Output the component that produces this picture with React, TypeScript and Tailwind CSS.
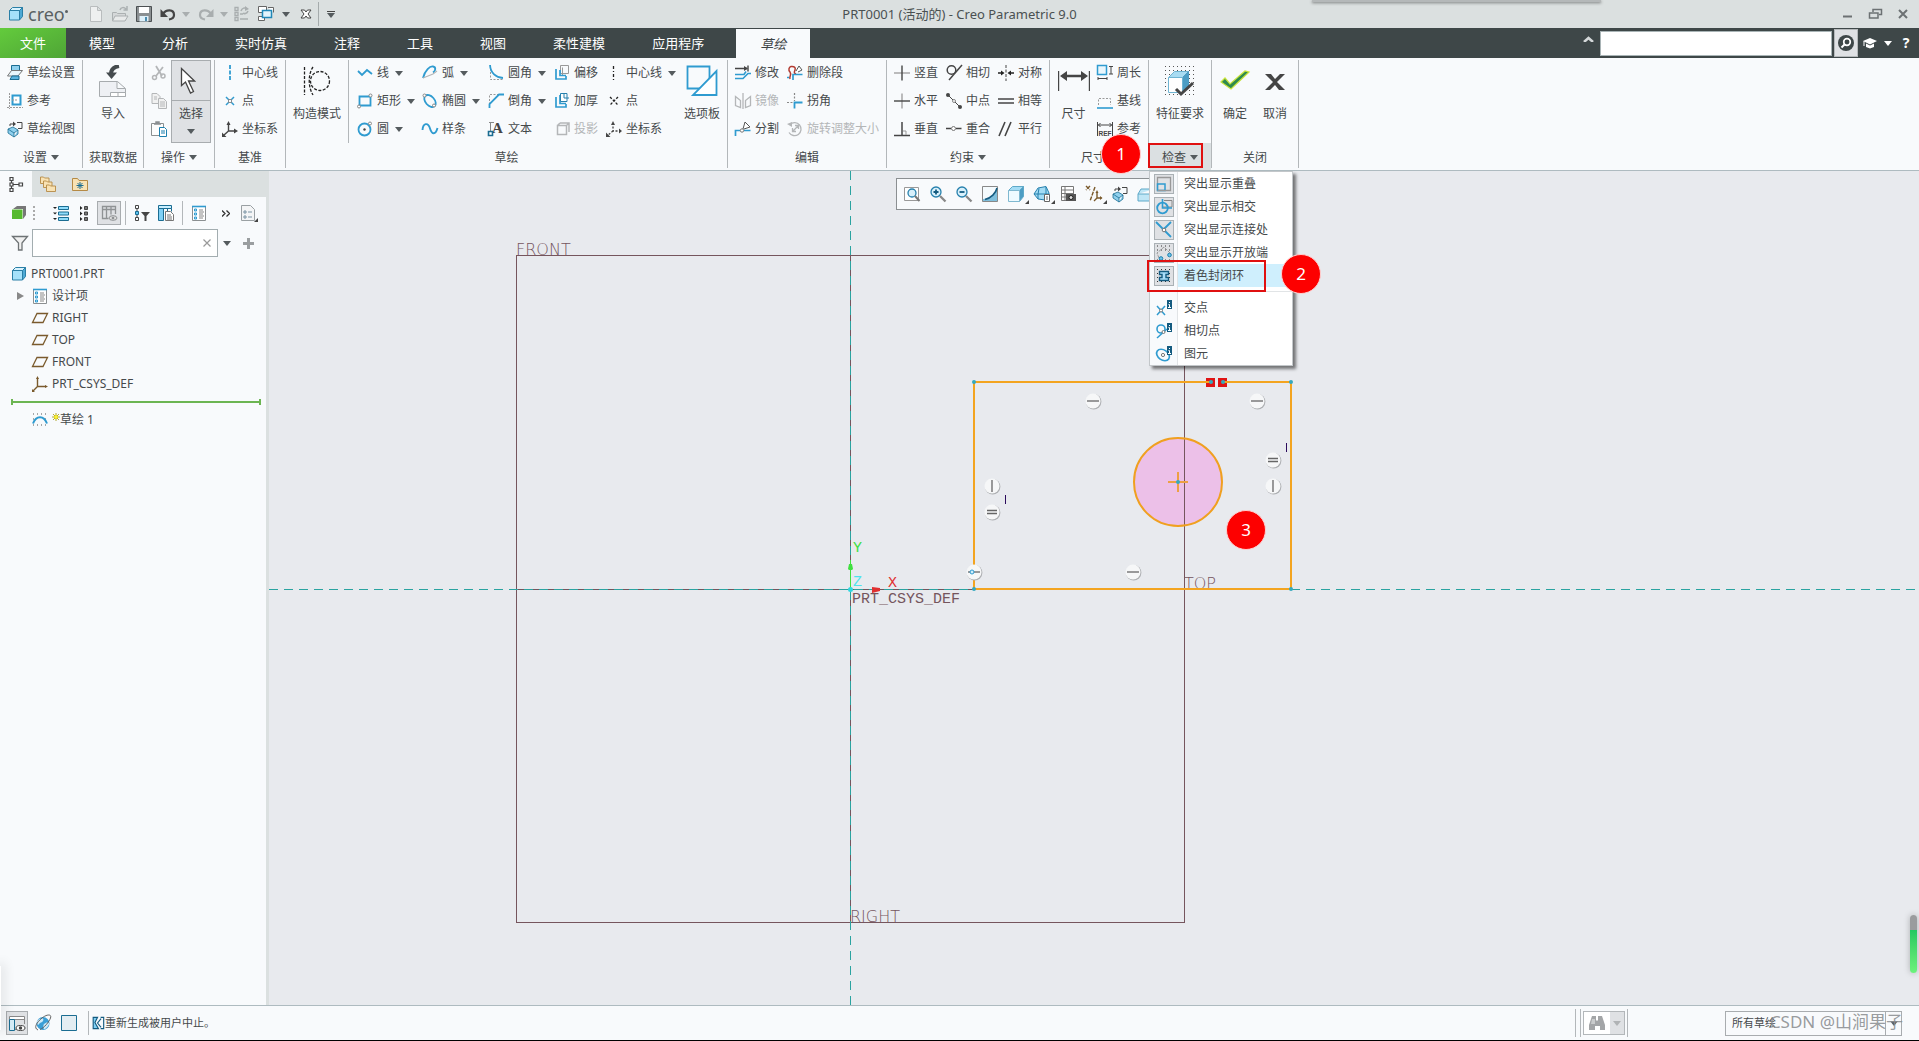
import { useState } from 'react';
import type { ReactNode } from 'react';
import clsx from 'clsx';

const B = '#2f9bd0';
const D = '#454545';
const G = '#b4b6b8';
const BROWN = '#7a5a2c';

// small 16x16 glyphs used by the ribbon, the trees and the menus
const ICONS: Record<string, ReactNode> = {
  sketchSetup: (
    <>
      <path d="M4.500 .5h8v8h-8z" fill="#8fd0ee" stroke="#1b6d92" />
      <path d="M4.500 5.500H15.500L11 11H.5z" fill="#e8f6fc" stroke="#777" />
      <path d="M3 14.500l2-3.500h7v3.500z" fill="#5bb4df" stroke="#1b6d92" />
    </>
  ),
  refs: (
    <>
      <path d="M5.500 2.500h8v9h-8z" fill="#fff" stroke={B} strokeWidth="2" />
      <path d="M2.500 0v16M0 14.500h16M5 7h6" stroke="#999" strokeDasharray="2 1" />
    </>
  ),
  sketchView: (
    <>
      <path d="M1 8l5-2 5 3-4 3zM1 8v4l6 4v-4M11 9v4l-4 3" fill="#8fd0ee" stroke="#1b6d92" strokeWidth=".8" />
      <path d="M10 1.500h5v6h-4M3 5V3h5" stroke={D} />
      <path d="M6 .5L9 3 6 5.500z" fill={D} />
    </>
  ),
  cut: (
    <>
      <path d="M5 1l6 10M12 2L5 11" stroke={G} strokeWidth="1.800" />
      <circle cx="3.500" cy="12.500" r="2" stroke={G} strokeWidth="1.500" />
      <circle cx="12" cy="11" r="2" stroke={G} strokeWidth="1.500" />
    </>
  ),
  copy: (
    <>
      <path d="M1 .5h5l3 3v7H1z" fill="#f1f1f1" stroke={G} />
      <path d="M7.500 5.500h5l3 3v7h-8zM9 9h5M9 11h5M9 13h5M3 4h3M3 6h3" fill="#f1f1f1" stroke={G} />
    </>
  ),
  paste: (
    <>
      <path d="M.5 2.500h12v12H.5z" fill="#fdfdfd" stroke="#8b8f91" />
      <path d="M3 3h7M5 1h3v1H5z" stroke="#8b8f91" strokeWidth="1.500" />
      <path d="M8.500 6.500h5l2 2v7h-7zM10 10h4M10 12h4" fill="#fff" stroke="#1b7fae" />
    </>
  ),
  axis: <path d="M8 0v16" stroke={B} strokeWidth="1.800" strokeDasharray="4 1.500" />,
  point: (
    <>
      <path d="M4 4l8 8M12 4l-8 8" stroke={B} strokeWidth="1.500" />
      <path d="M6.500 6.500h3v3h-3z" fill="#f8fafc" stroke="#777" strokeWidth=".8" />
    </>
  ),
  csys: (
    <>
      <path d="M6.500 2v8h7M6.500 10L2 14" stroke={D} strokeWidth="1.400" />
      <path d="M4.500 4l2-4 2 4zM12 7.500l4 2.500-4 2.500zM0 11.500V16h4.500z" fill={D} />
    </>
  ),
  csysDash: (
    <>
      <path d="M7 2v8h7M7 10l-5 4" stroke={D} strokeDasharray="2 1.500" strokeWidth="1.300" />
      <path d="M5 4l2-4 2 4zM13 7.500l3 2.500-3 2.500zM0 11.500V16h4.500z" fill={D} />
    </>
  ),
  line: <path d="M1 6l4 4 5-5 5 4" stroke={B} strokeWidth="1.800" />,
  rect: (
    <>
      <path d="M2.500 3.500h11v9h-11z" stroke={B} strokeWidth="1.800" />
      <circle cx="13.500" cy="2.500" r="1.500" fill="#fff" stroke="#888" />
      <circle cx="2" cy="13.500" r="1.500" fill="#fff" stroke="#888" />
    </>
  ),
  circle: (
    <>
      <circle cx="7.500" cy="8.500" r="6" stroke={B} strokeWidth="1.800" />
      <circle cx="7.500" cy="8.500" r="1.200" fill={D} />
      <circle cx="13" cy="2.500" r="1.500" fill="#fff" stroke="#888" />
    </>
  ),
  arc: (
    <>
      <path d="M1 13C3 5 8 1 11 1.500s3 4 0 6" stroke={B} strokeWidth="1.800" />
      <path d="M1 13l10-4 4-3" stroke={G} strokeWidth="1.200" />
    </>
  ),
  ellipse: (
    <>
      <ellipse cx="8" cy="8" rx="7" ry="4.500" transform="rotate(48 8 8)" stroke={B} strokeWidth="1.800" />
      <circle cx="2.500" cy="2.500" r="1.500" fill="#fff" stroke="#888" />
      <circle cx="12" cy="12.500" r="1.500" fill="#fff" stroke="#888" />
    </>
  ),
  spline: <path d="M.5 9C1 2 6 1 8 7.500S13.500 14 15.500 7" stroke={B} strokeWidth="1.900" />,
  fillet: (
    <>
      <path d="M2.500 0v14.500H16" stroke="#999" strokeDasharray="2 1.500" />
      <path d="M2 0c.5 8 6 12.500 13 13" stroke={B} strokeWidth="1.800" />
    </>
  ),
  chamfer: (
    <>
      <path d="M1.500 15V1.500H15" stroke="#999" strokeDasharray="2 1.500" />
      <path d="M1.500 15v-4L11 1.500h5" stroke={B} strokeWidth="1.800" />
    </>
  ),
  text: (
    <>
      <path d="M1 1.500h5M2.500 1v9" stroke="#888" />
      <text x="4" y="12" fontFamily="Liberation Serif, serif" fontWeight="700" fontSize="15" fill={D}>A</text>
      <path d="M.5 10.500h4v4h-4z" fill="#fff" stroke="#1b6d92" strokeWidth="1.600" />
    </>
  ),
  offset: (
    <>
      <path d="M6.500 .5h8v8h-8zM8.500 2.500v8" stroke="#999" />
      <path d="M2 4v10h10v-3M6 5v5.500h6" stroke={B} strokeWidth="1.700" />
    </>
  ),
  thicken: (
    <>
      <path d="M2 4v10h10v-3M6 2v8.500h6" stroke={B} strokeWidth="1.700" />
      <path d="M6.500 .5H13v8H6.500zM10 1v4h5" fill="#fff" stroke="#2680ad" />
    </>
  ),
  project: <path d="M3.500 4.500h9v9h-9zM6 2h9v9M3.500 4.500L6 2M12.500 4.500L15 2" stroke={G} strokeWidth="1.500" />,
  axisBlack: <path d="M7.500 1v14" stroke="#222" strokeWidth="1.300" strokeDasharray="3 2 1 2" />,
  pointBlack: <path d="M4 4l8 8M12 4l-8 8" stroke="#222" strokeWidth="1.300" strokeDasharray="2.500 1.500" />,
  modify: (
    <>
      <path d="M0 3.500h12M13 .5v6" stroke={D} strokeWidth="1.400" />
      <path d="M9 1l4 2.500L9 6z" fill={D} />
      <path d="M0 9.500h9l2-3M0 13.500h8l5-5h3" stroke={B} strokeWidth="1.600" />
    </>
  ),
  mirror: <path d="M8 0v16M.5 3.500l5 4v7l-5-2zM15.500 3.500l-5 4v7l5-2z" stroke={G} strokeWidth="1.300" />,
  divide: (
    <>
      <path d="M.5 15V9.500H5M9 9.500h6.500" stroke={B} strokeWidth="1.700" />
      <circle cx="7" cy="9.500" r="1.700" fill="#fff" stroke="#777" />
      <path d="M8 8l2-7 5 5-6 2" fill="#fff" stroke="#555" />
    </>
  ),
  deleteSeg: (
    <>
      <path d="M3 14c-1-3 2-4 0-7-2-2-1-5 1-5.500 3-.5 5 1 4 3.500s-1 3 1 4" stroke="#b23a30" strokeWidth="1.500" />
      <path d="M0 12.500h2M6 15V9.500h9.500" stroke={B} strokeWidth="1.700" />
      <path d="M9 6l3-5 3 4-4 2" fill="#fff" stroke="#555" />
    </>
  ),
  corner: (
    <>
      <path d="M7.500 0v8M0 9.500h7" stroke="#888" strokeWidth="1.200" strokeDasharray="2 1.500" />
      <path d="M7.500 15.500v-6h8" stroke={B} strokeWidth="1.800" />
    </>
  ),
  rotate: (
    <>
      <path d="M3 3.500a6.500 6.500 0 1 1-1 8M6 10l5-5M8 4.500h3.500V8M5.500 7v3.500H9" stroke={G} strokeWidth="1.300" />
      <path d="M0 3l5-2v5z" fill={G} />
    </>
  ),
  vertical: (
    <>
      <path d="M0 8h16" stroke="#999" strokeWidth="1.300" />
      <path d="M8 .5v15" stroke={D} strokeWidth="1.400" />
    </>
  ),
  horizontal: (
    <>
      <path d="M8 .5v15" stroke="#999" strokeWidth="1.300" />
      <path d="M0 8h16" stroke={D} strokeWidth="1.400" />
    </>
  ),
  perpendicular: (
    <>
      <path d="M8 1v13M0 14.500h16" stroke={D} strokeWidth="1.500" />
      <path d="M9 10h3v4" stroke="#999" />
    </>
  ),
  tangent: (
    <>
      <circle cx="5.500" cy="5" r="4.300" stroke={D} strokeWidth="1.500" />
      <path d="M16 0L3 15" stroke={D} strokeWidth="1.500" />
    </>
  ),
  midpoint: (
    <>
      <path d="M2 2l12 12" stroke={D} />
      <circle cx="2" cy="2" r="2" fill={D} />
      <circle cx="14" cy="14" r="2" fill={D} />
      <circle cx="8" cy="8" r="1.500" fill="#fff" stroke="#888" />
    </>
  ),
  coincident: (
    <>
      <path d="M0 7.500h5M10 7.500h5.500" stroke={D} strokeWidth="1.500" />
      <circle cx="7.500" cy="7.500" r="2" fill="#fff" stroke="#777" />
    </>
  ),
  symmetric: (
    <>
      <path d="M8 0v16" stroke={D} strokeDasharray="3 1.500" />
      <path d="M0 8h4M12 8h4" stroke="#222" strokeWidth="1.500" />
      <path d="M3 5.500l3.500 2.500L3 10.500zM13 5.500L9.500 8l3.500 2.500z" fill="#222" />
    </>
  ),
  equal: <path d="M0 6h16M0 10h16" stroke={D} strokeWidth="1.500" />,
  parallel: <path d="M7 1L1 15M13 1L7 15" stroke={D} strokeWidth="1.600" />,
  perimeter: (
    <>
      <path d="M.5 .5h9v9h-9z" fill="#e9f6fc" stroke={B} strokeWidth="1.500" />
      <path d="M14 1v8M12 1.500h4M12 9h4M1 13.500h9M1 12v3M10 12v3" stroke={D} />
    </>
  ),
  baseline: (
    <>
      <path d="M1.500 12V5.500h12V12" stroke="#999" strokeDasharray="2 1.500" />
      <path d="M0 15h16" stroke={B} strokeWidth="1.600" />
    </>
  ),
  refDim: (
    <>
      <path d="M.5 1v14M15.500 1v14M1 4h14M3.500 2L1.500 4l2 2M12.500 2l2 2-2 2" stroke={D} />
      <text x="1.500" y="14.500" fontFamily="Liberation Sans, sans-serif" fontWeight="700" fontSize="6.500" fill={D}>REF</text>
    </>
  ),
  cube: (
    <>
      <path d="M1.500 4.500L4.500 1.500h10l-3 3z" fill="#d8f2fd" stroke="#2a7fa6" />
      <path d="M11.500 4.500l3-3v9l-3 3.500z" fill="#4ea9d4" stroke="#2a7fa6" />
      <path d="M1.500 4.500h10V14h-10z" fill="#a5e1fa" stroke="#2a7fa6" />
    </>
  ),
  greenCube: (
    <>
      <path d="M2 4l4-3h9l-3 3zM12 4l3-3v9l-3 4z" fill="#777" />
      <path d="M1 4.500h10.500V14H1z" fill="#57b92f" />
    </>
  ),
  plane: <path d="M5 3.500h10.500L11 12.500H.5z" stroke={BROWN} strokeWidth="1.300" />,
  csysBrown: (
    <>
      <path d="M5.500 2v8.500H14M5.500 10.500L1 15" stroke={BROWN} strokeWidth="1.400" />
      <path d="M4 3L5.500 0 7 3zM13 9l3 1.500-3 1.500zM0 13v3h3z" fill={BROWN} />
    </>
  ),
  list: (
    <>
      <path d="M1.500 1.500h13v14h-13z" fill="#fff" stroke="#8b8f91" />
      <path d="M1 1.500h14" stroke={B} strokeWidth="1.600" />
      <path d="M3.500 4h2v2h-2zM3.500 8h2v2h-2zM3.500 12h2v2h-2z" stroke={B} fill="#cfeefb" />
      <path d="M8 5h4M8 7h5M8 9h4M8 11h5M8 13h4" stroke="#888" />
    </>
  ),
  sketchArc: (
    <>
      <path d="M1 2h1M5 2h1M9 2h1M13 2h1M1 13h1M5 13h1M9 13h1M13 13h1M1 7h1M13 7h1" stroke="#555" />
      <path d="M1 11.500C4 3 12 3 15 11.500" stroke={B} strokeWidth="2" />
    </>
  ),
  treeTab: (
    <path d="M2 1.500h3v3H2zM2 7h3v3H2zM2 12.500h3v3H2zM11 7h3.500v3H11zM3.500 4.500V7M3.500 10v2.500M5 8.500h6" stroke={D} strokeWidth="1.200" />
  ),
  folders: (
    <g fill="#f8e2b4" stroke="#b58a45" strokeWidth=".9">
      <path d="M.5 1h3l1 1h4.500v5.500H.5z" />
      <path d="M3.500 5h3l1 1h4.500v5.500H3.500z" />
      <path d="M6.500 9h3l1 1h5v5.500h-9z" />
    </g>
  ),
  favFolder: (
    <>
      <path d="M.5 2.500h5l1.500 2h8.500v10H.5z" fill="#f8e2b4" stroke="#b58a45" />
      <path d="M8 6v7M4.500 9.500h7M5.500 7l5 5M10.500 7l-5 5" stroke="#1b6d92" />
    </>
  ),
  expand: (
    <>
      <path d="M5.500 1.500h10v3h-10zM5.500 7h10v3h-10zM5.500 12.500h10v3h-10z" fill="#8fdcfb" stroke="#1b6d92" />
      <path d="M0 2h4L2 4zM0 7.500h4l-2 2zM0 13h4l-2 2z" fill="#222" />
    </>
  ),
  collapse: (
    <>
      <path d="M7.500 1.500h3v3h-3zM7.500 7h3v3h-3zM7.500 12.500h3v3h-3z" fill="#777" stroke={D} />
      <path d="M3 1l2.500 2L3 5zM3 6.500l2.500 2-2.500 2zM3 12l2.500 2L3 16z" fill="#222" />
    </>
  ),
  columnsEye: (
    <>
      <path d="M1.500 1.500h13v3h-13zM1.500 4.500v9h6M5.500 1.500v12M10 1.500v8M14.500 4v5" stroke="#8f9294" strokeWidth="1.300" />
      <ellipse cx="12" cy="13" rx="4" ry="2.300" fill="#ddd" stroke="#8f9294" />
      <circle cx="12" cy="13" r="1.300" fill="#8f9294" />
    </>
  ),
  treeFilter: (
    <>
      <path d="M1.500 .5h3v3h-3zM1.500 12.500h3v3h-3zM3 3.500v3M3 10v2.500" stroke={D} />
      <path d="M1.500 6.500h3v3h-3z" fill="#5cc3f0" stroke="#1b6d92" />
      <path d="M7 7h9l-3.500 4v5h-2v-5z" fill={D} />
    </>
  ),
  columns: (
    <>
      <path d="M.5 .5h13v3H.5z" fill="#c9efff" stroke="#1b6d92" />
      <path d="M.5 3.500h5v12h-5z" fill="#7fd0f5" stroke="#1b6d92" />
      <path d="M9.500 3.500v3M13.500 3.500v3" stroke="#1b6d92" />
      <path d="M7.500 6.500h5l3 3v6h-8zM9 10h4M9 12h5M9 14h5" fill="#fff" stroke="#777" />
    </>
  ),
  docTree: (
    <>
      <path d="M.5 .5h9l4 4v11H.5z" fill="#f4f5f6" stroke="#9aa0a3" />
      <path d="M3 6h2v2H3zM3 11h2v2H3zM7 7h4M7 12h4" stroke="#7b93a3" />
      <path d="M17 13v4h-4z" fill="#444" />
    </>
  ),
  funnel: <path d="M.5 1.500h15L10 8v7H6.500V8z" fill="#f1f1f1" stroke="#6e7375" strokeWidth="1.300" />,
  newDoc: <path d="M2.500 .5h7l4 4v11h-11zM9.500 .5v4h4" fill="#eef0f0" stroke="#b9bdbe" />,
  open: (
    <>
      <path d="M.5 6.500h4l1 1h8v7H.5z" fill="#d5d8d9" stroke="#abb0b1" />
      <path d="M3 10h13l-3 5H.5z" fill="#e8eaea" stroke="#abb0b1" />
      <path d="M8 4c1-3 4-3 6-1M11.500 4H15V0" stroke="#abb0b1" strokeWidth="1.500" />
    </>
  ),
  save: (
    <>
      <path d="M.5 .5h15v15H.5z" fill="#8b9092" stroke="#4b5052" />
      <path d="M3 1h10v6H3z" fill="#fff" />
      <path d="M3.500 10h9v5.500h-9z" fill="#dff1fa" />
      <path d="M9 11h2v4H9z" fill="#4b8db0" />
    </>
  ),
  undo: (
    <>
      <path d="M3 8c3-5 11-5 11 1 0 3-2 4-5 4.500" stroke={D} strokeWidth="2.200" />
      <path d="M.5 3v8h7.500z" fill={D} />
    </>
  ),
  redo: (
    <>
      <path d="M13 8C10 3 2 3 2 9c0 3 2 4 5 4.500" stroke="#a9aeaf" strokeWidth="2.200" />
      <path d="M15.500 3v8H8z" fill="#a9aeaf" />
    </>
  ),
  regen: (
    <>
      <path d="M1 1.500h3v3H1zM1 6.500h3v3H1zM1 11.500h3v3H1zM6 8h3M6 13h8" stroke="#a9aeaf" strokeWidth="1.300" />
      <path d="M7 5c1-3 4-4 6-2M14 5c-1 3-4 3-5 2" stroke="#a9aeaf" strokeWidth="1.500" />
      <path d="M11 0l4 3-4 2z" fill="#a9aeaf" />
    </>
  ),
  windows: (
    <>
      <path d="M.5 .5h8v6h-8zM.5 10.500h6v4h-6zM10 1.500h5.500v5" fill="#fff" stroke="#666" />
      <path d="M4.500 4.500h9v7h-9z" fill="#e3f4fc" stroke="#2188b8" strokeWidth="1.500" />
    </>
  ),
  closeWin: <path d="M3 4h3.500L8 6l1.500-2H13l-3 4 3 4H9.500L8 10l-1.500 2H3l3-4z" fill="#fff" stroke={D} />,
  zoomFit: (
    <>
      <path d="M.5 1.500h14v13H.5z" fill="#fff" stroke="#999" />
      <circle cx="8" cy="7" r="4" fill="#d8f0fb" stroke="#2680ad" strokeWidth="1.300" />
      <path d="M11 10l4.500 5" stroke="#777" strokeWidth="2" />
    </>
  ),
  zoomIn: (
    <>
      <circle cx="6" cy="6" r="5" fill="#d8f0fb" stroke="#2680ad" strokeWidth="1.300" />
      <path d="M10 10l5.500 5.500" stroke="#888" strokeWidth="2.300" />
      <path d="M3.500 6h5M6 3.500v5" stroke="#145b80" strokeWidth="1.800" />
    </>
  ),
  zoomOut: (
    <>
      <circle cx="6" cy="6" r="5" fill="#d8f0fb" stroke="#2680ad" strokeWidth="1.300" />
      <path d="M10 10l5.500 5.500" stroke="#888" strokeWidth="2.300" />
      <path d="M3.500 6h5" stroke="#145b80" strokeWidth="1.800" />
    </>
  ),
  repaint: (
    <>
      <path d="M.5 .5h15v15H.5z" fill="#7fbfdc" stroke="#888" />
      <path d="M1 1h14c0 6-6 12-14 12z" fill="#f4fafd" />
      <path d="M15 2C14 7 9 12 3 13.500" stroke="#145b80" strokeWidth="1.600" />
    </>
  ),
  shaded: (
    <>
      <path d="M.5 4.500l4-4h11l-4 4z" fill="#a3dcf5" stroke="#5fa9c8" />
      <path d="M11.500 4.500l4-4v10l-4 5z" fill="#4d9dc4" stroke="#5fa9c8" />
      <path d="M.5 4.500h11v11H.5z" fill="#eefaff" stroke="#7fb8d0" />
    </>
  ),
  views: (
    <>
      <path d="M4 2L12 .5 15 7v5l-4 2-7-1-4-5z" fill="#a3dcf5" stroke="#2680ad" />
      <path d="M5 2.500L4 8v5M0 8h15M12 1v7" stroke="#2680ad" />
      <path d="M10.500 8.500h5v7h-5zM12 11h2M12 13h2" fill="#fff" stroke="#666" />
    </>
  ),
  viewMgr: (
    <>
      <path d="M1.500 .5h12v14h-12zM1.500 4h12M1.500 7.500h12M1.500 11h12M5 .5v14" fill="#fff" stroke="#777" />
      <path d="M6 8h10v7H6z" fill="#555" />
      <circle cx="11" cy="11.500" r="2" fill="#ddd" stroke="#222" />
    </>
  ),
  datum: (
    <>
      <path d="M0 0l4 4M4 0L0 4M9 1L4 15" stroke={BROWN} strokeWidth="1.400" strokeDasharray="4 1" />
      <path d="M11 6v6h4.500M11 12l-3 3" stroke={BROWN} strokeWidth="1.400" />
      <path d="M9.500 7L11 4l1.500 3zM14 10l2.500 2-2.500 2z" fill={BROWN} />
    </>
  ),
  section: <path d="M0 8l3-5h13v10l-3 2H0zM0 8h13l3-5M13 8v7" fill="#bfe6f6" stroke="#5fa9c8" />,
  overlap: (
    <>
      <path d="M1.500 1.500h13v13h-13z" stroke="#999" strokeWidth="1.300" />
      <path d="M1.500 14.500V8H9v6.500z" stroke={B} strokeWidth="1.500" />
      <path d="M1.500 14.500h13" stroke="#999" />
    </>
  ),
  intersect: (
    <>
      <path d="M6.500 0v8H16V1.500H8" stroke="#888" />
      <circle cx="6.500" cy="9" r="5.300" stroke={B} strokeWidth="1.800" />
      <path d="M6.500 0v9H16" stroke={B} strokeWidth="1.600" />
    </>
  ),
  junction: (
    <>
      <path d="M0 0l15 15M15 0L8 7M8 7v0" stroke={B} strokeWidth="1.800" />
      <circle cx="8" cy="8" r="1.800" fill="#fff" stroke="#777" />
    </>
  ),
  openEnds: (
    <>
      <path d="M1 1h14M1 15h14M1 5h14" stroke="#333" strokeDasharray="1 3" />
      <path d="M3 13L1 8l7-6 6 6" stroke="#999" strokeDasharray="3 1" />
      <circle cx="5" cy="13.500" r="1.800" fill="#6ec4ea" stroke="#1b7fae" />
      <circle cx="13.500" cy="10" r="1.800" fill="#6ec4ea" stroke="#1b7fae" />
    </>
  ),
  closedLoop: (
    <>
      <path d="M1 1.500h15M1 5.500h15M1 9.500h15M1 13.500h15" stroke="#333" strokeDasharray="1 3" />
      <path d="M3.500 3.500h9v3H10v3h2.500v3h-9v-3H6v-3H3.500z" fill="#a9defa" stroke="#145b80" strokeWidth="1.400" />
    </>
  ),
  infoPoint: (
    <>
      <path d="M1 6l8 9M9 6l-8 9" stroke={B} strokeWidth="1.500" />
      <circle cx="5" cy="10.500" r="1.500" fill="#fff" stroke="#777" />
      <path d="M11 0h5v9h-5z" fill="#145b80" />
      <path d="M13.500 2v1M12.500 4.500h1V8M12 7.500h3" stroke="#fff" />
    </>
  ),
  infoTangent: (
    <>
      <circle cx="5" cy="6" r="4" stroke={B} strokeWidth="1.600" />
      <path d="M1 15L11 6" stroke={B} strokeWidth="1.500" />
      <circle cx="7.500" cy="9" r="1.500" fill="#fff" stroke="#777" />
      <path d="M11 0h5v9h-5z" fill="#145b80" />
      <path d="M13.500 2v1M12.500 4.500h1V8M12 7.500h3" stroke="#fff" />
    </>
  ),
  infoEntity: (
    <>
      <ellipse cx="7" cy="9" rx="7" ry="5" transform="rotate(35 7 9)" stroke={B} strokeWidth="1.700" />
      <circle cx="7" cy="9" r="1.600" fill="#fff" stroke="#777" />
      <path d="M11 0h5v9h-5z" fill="#145b80" />
      <path d="M13.500 2v1M12.500 4.500h1V8M12 7.500h3" stroke="#fff" />
    </>
  ),
  navToggle: (
    <>
      <path d="M.5 1.500h15v3H.5zM15.500 4v5M5 14.500h4" fill="#fff" stroke="#888" />
      <path d="M.5 4.500h5v11h-5z" fill="#d6edf8" stroke="#1b6d92" />
      <ellipse cx="11.500" cy="13" rx="4.500" ry="2.500" fill="#fff" stroke={D} />
      <circle cx="11.500" cy="13" r="1.700" fill={D} />
    </>
  ),
  globe: (
    <>
      <circle cx="8" cy="8.500" r="6.500" fill="#3b9fd6" />
      <path d="M5 4c3-2 4 0 3 2s-3 1-4 3-2 0-2-2 1-2 3-3zM9 9c3-2 4-2 5-1s-2 5-4 6-2-4-1-5z" fill="#cfeaf7" />
      <path d="M3 15C-2 13 2 7 7 3s10-4 8.500 0S9 13 5 14.500" stroke="#555" strokeWidth=".9" />
    </>
  ),
  pane: <path d="M.5 .5h15v15H.5z" fill="#e3edf2" stroke="#1b6d92" />,
  regenStop: (
    <>
      <path d="M2.500 1.500h5l-3 6 4 7h-6z" fill="#7fd0f5" stroke="#145b80" strokeWidth="1.300" />
      <path d="M11 1.500h3.500v13H11M11.500 3L7.500 8l4 5" stroke="#145b80" strokeWidth="1.300" />
    </>
  ),
  binoculars: (
    <>
      <path d="M3 1h4v4l1 1 1-1V1h4l3 9v5h-5v-4H6v4H0v-5z" fill="#a3a5a7" />
      <path d="M3 4h3v5H2z" fill="#c9cbcc" />
    </>
  ),
  star: (
    <>
      <path d="M4 4h8v8H4z" fill="#fbf03a" />
      <path d="M8 0v16M0 8h16M2 2l12 12M14 2L2 14" stroke="#a09600" strokeWidth="1.600" />
      <path d="M5 5h6v6H5z" fill="#fbf03a" />
    </>
  ),
};

function Icon({ name, className = 'w-4 h-4' }: { name: string; className?: string }) {
  return (
    <svg viewBox="0 0 16 16" fill="none" aria-hidden="true" className={clsx('shrink-0 overflow-visible', className)}>
      {ICONS[name]}
    </svg>
  );
}

function Caret({ className = 'text-[#555b5e]' }: { className?: string }) {
  return (
    <svg viewBox="0 0 8 5" aria-hidden="true" className={clsx('w-2 h-[5px] shrink-0', className)}>
      <path d="M0 0h8L4 5z" fill="currentColor" />
    </svg>
  );
}

type Tool = { icon: string; label: string; caret?: boolean; disabled?: boolean };

function ToolColumn({ tools, className }: { tools: Tool[]; className?: string }) {
  return (
    <div className={clsx('flex flex-col shrink-0', className)}>
      {tools.map((tool) => (
        <button
          key={tool.label}
          type="button"
          disabled={tool.disabled}
          className="flex items-center gap-1 h-7 whitespace-nowrap disabled:text-[#b4b6b8]"
        >
          <Icon name={tool.icon} />
          <span>{tool.label}</span>
          {tool.caret && <span className="pl-0.5"><Caret /></span>}
        </button>
      ))}
    </div>
  );
}

function BigButton({ label, className, children }: { label: string; className?: string; children: ReactNode }) {
  return (
    <button type="button" className={clsx('flex flex-col items-center shrink-0 pt-1.5 h-[84px] whitespace-nowrap', className)}>
      <svg viewBox="0 0 32 32" fill="none" aria-hidden="true" className="w-8 h-8">
        {children}
      </svg>
      <span className="mt-2 leading-[18px]">{label}</span>
    </button>
  );
}

function Group({ title, caret, className, children }: { title: string; caret?: boolean; className?: string; children: ReactNode }) {
  return (
    <section aria-label={title} className={clsx('flex flex-col shrink-0 pt-px', className)}>
      <div className="flex h-[84px]">{children}</div>
      <div className="flex items-center justify-center gap-1 h-[27px] pt-0.5">
        <span>{title}</span>
        {caret && <Caret />}
      </div>
    </section>
  );
}

function Divider({ className = 'my-0.5' }: { className?: string }) {
  return <div className={clsx('w-px shrink-0 bg-[#b3b7ba]', className)} />;
}

function Badge({ n, className }: { n: number; className?: string }) {
  return (
    <span
      className={clsx(
        'absolute z-30 flex items-center justify-center w-10 h-10 rounded-full bg-[#fd0000] border border-[#ffd0d0] text-white text-[17px]',
        className,
      )}
    >
      {n}
    </span>
  );
}

function TitleBar() {
  return (
    <header className="relative flex items-center h-7 px-2 bg-[#dbe0e0] shrink-0">
      <Icon name="cube" />
      <span className="flex items-center w-[60px] pl-1 text-[18px] leading-7 text-[#596062]">
        creo<span className="w-[3px] h-[3px] mb-1.5 rounded-full bg-[#596062]" />
      </span>
      <div className="flex items-center">
        {['newDoc', 'open', 'save', 'undo'].map((name) => (
          <button key={name} type="button" aria-label={name} className="w-6 flex justify-center">
            <Icon name={name} />
          </button>
        ))}
        <button type="button" aria-label="undo list" className="w-3 flex justify-center text-[#a9aeaf]"><Caret className="" /></button>
        <button type="button" aria-label="redo" className="w-7 flex justify-center"><Icon name="redo" /></button>
        <button type="button" aria-label="redo list" className="w-2 flex justify-center text-[#a9aeaf]"><Caret className="" /></button>
        <button type="button" aria-label="regenerate" className="w-7 flex justify-center"><Icon name="regen" /></button>
        <button type="button" aria-label="windows" className="w-5 flex justify-center"><Icon name="windows" /></button>
        <button type="button" aria-label="window list" className="w-5 flex justify-center"><Caret /></button>
        <button type="button" aria-label="close window" className="w-5 flex justify-center"><Icon name="closeWin" /></button>
      </div>
      <div className="w-px h-6 ml-0.5 bg-[#a5abac]" />
      <button type="button" aria-label="customize" className="flex flex-col items-center gap-px w-6">
        <span className="w-2 h-px bg-[#454545]" />
        <Caret />
      </button>
      <h1 className="absolute inset-x-0 top-0 text-center text-[13px] leading-7 text-[#4a5052] pointer-events-none">
        PRT0001 (活动的) - Creo Parametric 9.0
      </h1>
      <div className="absolute top-0 right-[318px] w-[289px] h-0.5 bg-[#b4b8b9] shadow-[0_1px_3px_rgba(0,0,0,0.5)]" />
      <div className="flex gap-3 ml-auto text-[#6c7173]">
        <button type="button" aria-label="minimize" className="w-4 h-4">
          <svg viewBox="0 0 16 16" fill="none"><path d="M4 10.500h9" stroke="currentColor" strokeWidth="2" /></svg>
        </button>
        <button type="button" aria-label="restore" className="w-4 h-4">
          <svg viewBox="0 0 16 16" fill="none"><path d="M6 6V3.500h8.500v5H12M2.500 7h8.500v5H2.500z" stroke="currentColor" strokeWidth="1.500" /></svg>
        </button>
        <button type="button" aria-label="close" className="w-4 h-4">
          <svg viewBox="0 0 16 16" fill="none"><path d="M4 4l8 8M12 4l-8 8" stroke="currentColor" strokeWidth="2" /></svg>
        </button>
      </div>
    </header>
  );
}

const TABS = ['模型', '分析', '实时仿真', '注释', '工具', '视图', '柔性建模', '应用程序'];

function TabBar() {
  return (
    <nav className="flex h-[30px] bg-[#3e4748] text-white text-[13px] leading-[30px] shrink-0">
      <button type="button" className="px-5 bg-gradient-to-br from-[#63cb3c] to-[#4fa536]">文件</button>
      {TABS.map((tab) => (
        <button key={tab} type="button" className="pl-[23px] pr-6 whitespace-nowrap">{tab}</button>
      ))}
      <button type="button" className="ml-2 mt-px px-6 italic bg-[#f8fafc] text-[#3c4244]">草绘</button>
      <div className="flex items-center ml-auto pr-px">
        <button type="button" aria-label="collapse ribbon" className="w-5 mr-0.5 mb-2 flex justify-center">
          <svg viewBox="0 0 11 6" fill="none" className="w-[11px] h-1.5"><path d="M1 6l4.500-4L10 6" stroke="#d5d9da" strokeWidth="2.500" /></svg>
        </button>
        <input
          type="search"
          aria-label="search"
          className="w-[232px] h-[25px] px-2 bg-white border border-[#a9b4b6] text-[#444] outline-none"
        />
        <button type="button" aria-label="find" className="flex items-center justify-center w-6 h-7 ml-0.5 bg-[#dfe1e4] border border-[#b5b9bb]">
          <svg viewBox="0 0 16 16" fill="none" className="w-4 h-4">
            <circle cx="8" cy="8" r="8" fill="#3e4748" />
            <circle cx="9" cy="7" r="3.300" stroke="#fff" strokeWidth="1.700" />
            <path d="M6.500 9.500L3.500 12.500" stroke="#fff" strokeWidth="2" />
          </svg>
        </button>
        <button type="button" aria-label="learning" className="w-6 flex justify-center">
          <svg viewBox="0 0 14 12" className="w-3.5 h-3">
            <path d="M7 1l7 3-7 3.500L0 4z" fill="#fff" />
            <path d="M3 6.500l4 2 4-2V10l-4 1.500L3 10zM.5 4h1v5h-1z" fill="#fff" />
          </svg>
        </button>
        <button type="button" aria-label="learning list" className="w-3 flex justify-center text-white"><Caret className="" /></button>
        <button type="button" className="w-6 text-sm font-bold">?</button>
      </div>
    </nav>
  );
}

const CHECK_MENU = [
  { icon: 'overlap', label: '突出显示重叠' },
  { icon: 'intersect', label: '突出显示相交' },
  { icon: 'junction', label: '突出显示连接处' },
  { icon: 'openEnds', label: '突出显示开放端' },
  { icon: 'closedLoop', label: '着色封闭环', active: true },
];

const INFO_MENU = [
  { icon: 'infoPoint', label: '交点' },
  { icon: 'infoTangent', label: '相切点' },
  { icon: 'infoEntity', label: '图元' },
];

function CheckMenu() {
  return (
    <div role="menu" className="absolute z-20 top-full left-0 mt-px w-36 bg-white border border-[#c3c7ca] shadow-[3px_3px_3px_rgba(0,0,0,0.5)]">
      {CHECK_MENU.map((item) => (
        <button key={item.label} type="button" role="menuitemcheckbox" aria-checked="true" className="flex items-center w-full h-[23px] whitespace-nowrap">
          <span className="flex items-center w-7 h-full pl-1 bg-[#f8fafc] border-r border-[#e1e4e6]">
            <span className="flex items-center justify-center w-5 h-5 bg-[#dfe1e4] border border-[#aab1b5]"><Icon name={item.icon} /></span>
          </span>
          <span className={clsx('flex-1 h-full pl-1.5 text-left leading-[23px]', item.active && 'bg-[#cfeffd]')}>{item.label}</span>
        </button>
      ))}
      <div className="flex h-[9px]">
        <span className="w-7 bg-[#f8fafc] border-r border-[#e1e4e6]" />
        <span className="flex-1 mt-1 border-t border-[#e1e4e6]" />
      </div>
      {INFO_MENU.map((item) => (
        <button key={item.label} type="button" role="menuitem" className="flex items-center w-full h-[23px]">
          <span className="flex items-center w-7 h-full pl-1.5 bg-[#f8fafc] border-r border-[#e1e4e6]"><Icon name={item.icon} /></span>
          <span className="pl-1.5">{item.label}</span>
        </button>
      ))}
      <span className="absolute -left-[3px] top-[88px] w-[119px] h-8 border-2 border-[#e01010]" />
      <Badge n={2} className="left-[131px] top-[82px]" />
    </div>
  );
}

function Ribbon({ menuOpen, onToggle }: { menuOpen: boolean; onToggle: () => void }) {
  return (
    <div className="relative flex h-[113px] bg-[#f8fafc] border-b border-[#aebbc0] shrink-0 leading-[18px]">
      <Group title="设置" caret className="w-[82px]">
        <ToolColumn
          className="pl-[7px]"
          tools={[
            { icon: 'sketchSetup', label: '草绘设置' },
            { icon: 'refs', label: '参考' },
            { icon: 'sketchView', label: '草绘视图' },
          ]}
        />
      </Group>
      <Divider />
      <Group title="获取数据" className="w-[60px]">
        <BigButton label="导入" className="w-full">
          <path d="M2.500 16.500h18l8 7v8h-26zM20 16.500v7h8" fill="#eef0f4" stroke="#a7abae" />
          <path d="M13.500 27.500h15v4h-15zM21 27.500v4" fill="#fff" stroke="#a7abae" />
          <path d="M22 1c-6 1-8 4-8 8" stroke="#454b4e" strokeWidth="4" />
          <path d="M9 7.500h11L14.500 14z" fill="#454b4e" />
        </BigButton>
      </Group>
      <Divider />
      <Group title="操作" caret className="w-[70px]">
        <div className="flex flex-col pl-[7px]">
          {['cut', 'copy', 'paste'].map((name) => (
            <button key={name} type="button" aria-label={name} className="h-7"><Icon name={name} /></button>
          ))}
        </div>
        <button type="button" className="flex flex-col items-center w-10 mt-px ml-1 bg-[#dfe1e4] border border-[#a8acaf]">
          <span className="flex items-center justify-center w-full h-10 pr-1.5 border-b border-[#a8acaf]">
            <svg viewBox="0 0 16 28" className="w-4 h-7"><path d="M1.500 1.500v17l4-3.500 5 11 3-1.500-5-10.500h6z" fill="#fff" stroke="#454545" strokeWidth="1.300" /></svg>
          </span>
          <span className="mt-1 mb-1.5">选择</span>
          <Caret />
        </button>
      </Group>
      <Divider />
      <Group title="基准" className="w-[70px]">
        <ToolColumn
          className="pl-[7px]"
          tools={[
            { icon: 'axis', label: '中心线' },
            { icon: 'point', label: '点' },
            { icon: 'csys', label: '坐标系' },
          ]}
        />
      </Group>
      <Divider />
      <Group title="草绘" className="w-[441px]">
        <BigButton label="构造模式" className="w-[62px]">
          <path d="M3.500 2v28M12 2C7 9 7 22 12 30" stroke="#222" strokeWidth="1.300" strokeDasharray="3 1.500" />
          <circle cx="19" cy="16" r="9.500" stroke="#222" strokeWidth="1.300" strokeDasharray="3 1.500" />
        </BigButton>
        <Divider className="mt-px" />
        <ToolColumn
          className="w-[73px] pl-2"
          tools={[
            { icon: 'line', label: '线', caret: true },
            { icon: 'rect', label: '矩形', caret: true },
            { icon: 'circle', label: '圆', caret: true },
          ]}
        />
        <ToolColumn
          className="w-[66px]"
          tools={[
            { icon: 'arc', label: '弧', caret: true },
            { icon: 'ellipse', label: '椭圆', caret: true },
            { icon: 'spline', label: '样条' },
          ]}
        />
        <ToolColumn
          className="w-[66px]"
          tools={[
            { icon: 'fillet', label: '圆角', caret: true },
            { icon: 'chamfer', label: '倒角', caret: true },
            { icon: 'text', label: '文本' },
          ]}
        />
        <ToolColumn
          className="w-[52px]"
          tools={[
            { icon: 'offset', label: '偏移' },
            { icon: 'thicken', label: '加厚' },
            { icon: 'project', label: '投影', disabled: true },
          ]}
        />
        <ToolColumn
          className="w-[76px]"
          tools={[
            { icon: 'axisBlack', label: '中心线', caret: true },
            { icon: 'pointBlack', label: '点' },
            { icon: 'csysDash', label: '坐标系' },
          ]}
        />
        <BigButton label="选项板" className="w-10">
          <path d="M1.500 1.500h22v22h-22z" stroke={B} strokeWidth="1.800" />
          <path d="M30.500 6v24H7z" fill="#fff" stroke={B} strokeWidth="1.800" />
        </BigButton>
      </Group>
      <Divider />
      <Group title="编辑" className="w-[158px]">
        <ToolColumn
          className="w-[59px] pl-[7px]"
          tools={[
            { icon: 'modify', label: '修改' },
            { icon: 'mirror', label: '镜像', disabled: true },
            { icon: 'divide', label: '分割' },
          ]}
        />
        <ToolColumn
          tools={[
            { icon: 'deleteSeg', label: '删除段' },
            { icon: 'corner', label: '拐角' },
            { icon: 'rotate', label: '旋转调整大小', disabled: true },
          ]}
        />
      </Group>
      <Divider />
      <Group title="约束" caret className="w-[162px]">
        <ToolColumn
          className="w-[59px] pl-[7px]"
          tools={[
            { icon: 'vertical', label: '竖直' },
            { icon: 'horizontal', label: '水平' },
            { icon: 'perpendicular', label: '垂直' },
          ]}
        />
        <ToolColumn
          className="w-[52px]"
          tools={[
            { icon: 'tangent', label: '相切' },
            { icon: 'midpoint', label: '中点' },
            { icon: 'coincident', label: '重合' },
          ]}
        />
        <ToolColumn
          tools={[
            { icon: 'symmetric', label: '对称' },
            { icon: 'equal', label: '相等' },
            { icon: 'parallel', label: '平行' },
          ]}
        />
      </Group>
      <Divider />
      <Group title="尺寸" caret className="w-[98px]">
        <BigButton label="尺寸" className="w-[47px]">
          <path d="M.5 6v20M31.500 6v20" stroke={D} strokeWidth="1.400" />
          <path d="M5 11h22" stroke={D} strokeWidth="2.500" />
          <path d="M2 11l7-5v10zM30 11l-7-5v10z" fill={D} />
        </BigButton>
        <ToolColumn
          tools={[
            { icon: 'perimeter', label: '周长' },
            { icon: 'baseline', label: '基线' },
            { icon: 'refDim', label: '参考' },
          ]}
        />
      </Group>
      <Divider />
      <section aria-label="检查" className="relative flex flex-col w-[62px] pt-px shrink-0">
        <BigButton label="特征要求" className="w-full">
          <path d="M1 1.500h30M1 5.500h30M1 9.500h30M1 13.500h30M1 17.500h30M1 21.500h30M1 25.500h30M1 29.500h30" stroke="#555" strokeDasharray="1 3" />
          <path d="M4.500 12.500l6-6h14l-6 6z" fill="#a9dcf2" stroke="#6fb4d2" />
          <path d="M18.500 12.500l6-6v15l-6 6z" fill="#4d9dc4" stroke="#4d9dc4" />
          <path d="M4.500 12.500h14v15h-14z" fill="#fff" stroke="#6fb4d2" />
          <path d="M12 24l5 5L29 18" stroke="#454545" strokeWidth="3" />
        </BigButton>
        <button
          type="button"
          aria-haspopup="menu"
          aria-expanded={menuOpen}
          onClick={onToggle}
          className="flex items-center justify-center gap-1 h-[27px] pt-0.5 bg-[#dbe0e2]"
        >
          检查 <Caret />
        </button>
        <span className="absolute -left-px bottom-0.5 w-[55px] h-[25px] border-2 border-[#e01010] pointer-events-none" />
        <Badge n={1} className="-left-12 top-[76px]" />
        {menuOpen && <CheckMenu />}
      </section>
      <Divider />
      <Group title="关闭" className="w-[86px]">
        <BigButton label="确定" className="w-10 ml-[3px]">
          <path d="M2 17l4-4 5 6L26 6l4 1-18 17z" fill="#2f8a4e" stroke="#c8e33a" strokeWidth="1.200" />
        </BigButton>
        <BigButton label="取消" className="w-10">
          <path d="M6 9h6l4 5 5-5h5l-8 8 8 8h-6l-4-5-5 5H6l8-8z" fill="#454545" />
        </BigButton>
      </Group>
      <Divider />
    </div>
  );
}

const TREE = [
  { icon: 'plane', label: 'RIGHT' },
  { icon: 'plane', label: 'TOP' },
  { icon: 'plane', label: 'FRONT' },
  { icon: 'csysBrown', label: 'PRT_CSYS_DEF' },
];

function Sidebar() {
  return (
    <aside className="relative flex flex-col w-[269px] shrink-0 bg-[#f8fafc] border-r-[3px] border-[#dbe0e0]">
      <div className="flex h-[26px] bg-[#dbe0e0]">
        <button type="button" aria-label="model tree" className="flex items-center justify-center w-8 bg-[#f8fafc]"><Icon name="treeTab" /></button>
        <button type="button" aria-label="folders" className="w-8 flex items-center justify-center"><Icon name="folders" /></button>
        <button type="button" aria-label="favorites" className="w-8 flex items-center justify-center"><Icon name="favFolder" /></button>
      </div>
      <div className="flex items-center h-8 pl-[11px]">
        <Icon name="greenCube" />
        <span className="w-0 h-3.5 ml-1.5 mr-[18px] border-l-2 border-dotted border-[#aaa]" />
        <button type="button" aria-label="expand all" className="w-6"><Icon name="expand" /></button>
        <button type="button" aria-label="collapse all" className="w-5"><Icon name="collapse" /></button>
        <button type="button" aria-label="show columns" className="flex items-center justify-center w-6 h-6 bg-[#dfe1e4] border border-[#a8acaf]"><Icon name="columnsEye" /></button>
        <span className="w-px h-6 mx-1 bg-[#b3b7ba]" />
        <button type="button" aria-label="tree filters" className="w-6 flex justify-center"><Icon name="treeFilter" /></button>
        <button type="button" aria-label="tree columns" className="w-6 flex justify-center"><Icon name="columns" /></button>
        <span className="w-px h-6 mx-1 bg-[#b3b7ba]" />
        <button type="button" aria-label="design items" className="w-6 flex justify-center"><Icon name="list" /></button>
        <button type="button" aria-label="more" className="w-[30px] flex justify-center">
          <svg viewBox="0 0 8 7" fill="none" className="w-2 h-[7px]"><path d="M0 .5l3 3-3 3M4.500 .5l3 3-3 3" stroke="#333" strokeWidth="1.300" /></svg>
        </button>
        <button type="button" aria-label="settings" className="w-4 flex justify-center"><Icon name="docTree" /></button>
      </div>
      <div className="flex items-center h-7 pl-3">
        <Icon name="funnel" />
        <label className="flex items-center w-[186px] h-7 ml-1 pr-1.5 bg-white border border-[#a3adb0]">
          <input type="text" aria-label="filter" className="flex-1 min-w-0 h-full px-2 outline-none" />
          <svg viewBox="0 0 8 8" fill="none" className="w-2 h-2"><path d="M.5 .5l7 7M7.500 .5l-7 7" stroke="#999" strokeWidth="1.200" /></svg>
        </label>
        <button type="button" aria-label="filter list" className="w-[18px] flex justify-center"><Caret /></button>
        <button type="button" aria-label="add" className="w-6 flex justify-center">
          <svg viewBox="0 0 11 11" className="w-[11px] h-[11px]"><path d="M4 0h3v4h4v3H7v4H4V7H0V4h4z" fill="#9a9ea0" /></svg>
        </button>
      </div>
      <ul className="pt-1.5">
        <li className="flex items-center gap-1 h-[22px] pl-[11px]"><Icon name="cube" />PRT0001.PRT</li>
        <li className="flex items-center gap-1 h-[22px] pl-4">
          <svg viewBox="0 0 8 8" className="w-2 h-2 mr-1"><path d="M1 0l7 4-7 4z" fill="#888" /></svg>
          <Icon name="list" />设计项
        </li>
        {TREE.map((node) => (
          <li key={node.label} className="flex items-center gap-1 h-[22px] pl-8"><Icon name={node.icon} />{node.label}</li>
        ))}
        <li className="flex items-center h-3.5 ml-[11px] mr-[5px]">
          <span className="w-0.5 h-1.5 bg-[#6cb552]" />
          <span className="flex-1 h-0.5 bg-[#6cb552]" />
          <span className="w-0.5 h-1.5 bg-[#6cb552]" />
        </li>
        <li className="flex items-center h-[22px] pl-8">
          <Icon name="sketchArc" />
          <Icon name="star" className="w-2 h-2 ml-1 mb-1.5" />
          草绘 1
        </li>
      </ul>
      <div className="absolute left-0 bottom-[-25px] z-10 w-px h-16 bg-white shadow-[0_0_12px_3px_rgba(0,0,0,0.12)]" />
    </aside>
  );
}

const VIEW_TOOLS = ['zoomFit', 'zoomIn', 'zoomOut', 'repaint', 'shaded', 'views', 'viewMgr', 'datum', 'sketchView', 'section'];

// constraint markers: h = horizontal, v = vertical, e = equal, c = coincident
const MARKERS = [
  { x: 1093, y: 401, kind: 'h' },
  { x: 1257, y: 401, kind: 'h' },
  { x: 1133, y: 572, kind: 'h' },
  { x: 992, y: 486, kind: 'v' },
  { x: 1273, y: 486, kind: 'v' },
  { x: 992, y: 512, kind: 'e' },
  { x: 1273, y: 460, kind: 'e' },
  { x: 974, y: 572, kind: 'c' },
];

const MARKER_PATHS: Record<string, string> = {
  h: 'M-6 0H6',
  v: 'M0-6V6',
  e: 'M-5-1.500H5M-5 1.500H5',
  c: 'M-6 0H6',
};

function Canvas() {
  return (
    <main className="relative flex-1 min-w-0 overflow-hidden bg-[#e8eaee]">
      <svg width="100%" height="100%" fill="none" className="absolute inset-0">
        <g transform="translate(-269 -171)">
          <g shapeRendering="crispEdges">
            <path d="M516.500 255.500H1184.500V922.500H516.500zM850.500 255V922M516 589.500H974" stroke="#75555d" />
            <path d="M850.500 171V1400M269 589.500H974M1291 589.500H3000" stroke="#2aa3a0" strokeDasharray="9 6" />
          </g>
          <g fill="#75555d" fontFamily="DejaVu Sans, sans-serif" fontWeight="200" fontSize="16">
            <text x="516" y="255">FRONT</text>
            <text x="850" y="922">RIGHT</text>
            <text x="1184" y="589">TOP</text>
          </g>
          <g fontFamily="Liberation Mono, monospace" fontSize="15">
            <text x="852" y="603" fill="#75555d">PRT_CSYS_DEF</text>
            <text x="888" y="587" fill="#e03030">X</text>
            <text x="853" y="552" fill="#3fe03f">Y</text>
            <text x="853" y="586" fill="#4fe3ee">Z</text>
          </g>
          <path d="M850.500 587V560" stroke="#3fe03f" />
          <path d="M848 569l1-5h3l1 5-1 1h-3z" fill="#3fe03f" />
          <path d="M872 587l8 1v3l-8 2z" fill="#e03030" />
          <circle cx="850.500" cy="589.500" r="2.500" fill="#2fd7e0" />
          <circle cx="1178" cy="482" r="44" fill="#ecc0e8" />
          <path d="M1184.500 438V526" stroke="#75555d" shapeRendering="crispEdges" />
          <circle cx="1178" cy="482" r="44" stroke="#f0a020" strokeWidth="2" />
          <path d="M1168 482h20M1178 472v20" stroke="#eda044" strokeWidth="2" />
          <path d="M1206 378h9v9h-9zM1218 378h9v9h-9z" fill="#e01414" />
          <path d="M1211 382H974V589H1291V382H1223" stroke="#f3a41f" strokeWidth="2" />
          <g fill="#35a9bd">
            <circle cx="974" cy="382" r="2" />
            <circle cx="1291" cy="382" r="2" />
            <circle cx="1211" cy="382" r="2" />
            <circle cx="1223" cy="382" r="2" />
            <circle cx="974" cy="589" r="2" />
            <circle cx="1291" cy="589" r="2" />
            <circle cx="1178" cy="482" r="2" />
          </g>
          <path d="M1005.500 495v9M1286.500 443v9" stroke="#2b0b5c" />
          {MARKERS.map((m) => (
            <g key={`${m.x}-${m.y}`} transform={`translate(${m.x} ${m.y})`}>
              <circle cx=".7" cy=".7" r="7.700" fill="#aeb0b3" />
              <circle r="7.500" fill="#f6f7f8" />
              <path d={MARKER_PATHS[m.kind]} stroke="#666" strokeWidth="1.300" />
              {m.kind === 'c' && <circle cx="-2" r="2" fill="#cfeefb" stroke={B} />}
            </g>
          ))}
        </g>
      </svg>
      <div className="absolute left-[627px] top-[7px] flex items-center h-8 px-0.5 bg-[#f8fafc] border border-[#8b8f92]">
        {VIEW_TOOLS.map((name) => (
          <button key={name} type="button" aria-label={name} className="relative w-[26px] flex justify-center">
            <Icon name={name} />
            {['shaded', 'views', 'datum'].includes(name) && (
              <svg viewBox="0 0 4 4" className="absolute right-0 -bottom-0.5 w-1 h-1"><path d="M4 0v4H0z" fill="#444" /></svg>
            )}
          </button>
        ))}
      </div>
      <Badge n={3} className="left-[957px] top-[339px]" />
      <div className="absolute right-0.5 bottom-8 w-[7px] h-[58px] rounded-full bg-gradient-to-b from-[#9a9c9e] from-25% via-[#20c860] via-25% to-[#6cf27c] shadow-[0_0_6px_rgba(0,0,0,0.25)]" />
    </main>
  );
}

function StatusBar() {
  return (
    <footer className="relative flex items-center h-9 pl-1.5 bg-[#f8fafc] border-t border-[#aebbc0] border-b border-b-black shrink-0 text-[11px]">
      <button type="button" aria-label="toggle navigator" className="flex items-center justify-center w-[22px] h-6 bg-[#dfe1e4] border border-[#a8acaf]"><Icon name="navToggle" /></button>
      <button type="button" aria-label="browser" className="w-[30px] flex justify-center"><Icon name="globe" /></button>
      <button type="button" aria-label="full screen" className="w-[22px] flex justify-center"><Icon name="pane" /></button>
      <span className="w-px h-6 ml-2 mr-0.5 bg-[#b3b7ba]" />
      <Icon name="regenStop" className="w-3.5 h-3.5" />
      <span className="leading-4">重新生成被用户中止。</span>
      <div className="flex items-center ml-auto">
        <span className="w-1.5 h-7 border-x border-[#b3b7ba]" />
        <button type="button" aria-label="find" className="flex items-stretch w-[42px] h-6 ml-0.5 bg-white border border-[#b3b7ba]">
          <span className="flex items-center justify-center flex-1"><Icon name="binoculars" /></span>
          <span className="flex items-center justify-center w-3.5 bg-[#dfe1e4] text-[#b0b3b5]"><Caret className="" /></span>
        </button>
        <span className="w-px h-7 ml-0.5 bg-[#b3b7ba]" />
      </div>
      <div className="relative flex w-[177px] h-[25px] ml-[97px] mr-[17px] border border-[#a8acaf]">
        <select aria-label="selection filter" className="w-full pl-1.5 appearance-none bg-transparent outline-none">
          <option>所有草绘</option>
        </select>
        <span className="absolute right-0 inset-y-0 flex items-center justify-center w-4 border-l border-[#a8acaf] pointer-events-none"><Caret /></span>
      </div>
      <span className="absolute right-4 top-0.5 text-[17px] leading-7 text-[#8c8f92]/90 whitespace-nowrap pointer-events-none">CSDN @山涧果子</span>
    </footer>
  );
}

export default function App() {
  const [menuOpen, setMenuOpen] = useState(true);

  return (
    <div className="flex flex-col h-screen min-w-[1320px] overflow-hidden text-xs text-[#45494b] font-['Noto_Sans','Noto_Sans_CJK_SC',sans-serif]">
      <TitleBar />
      <TabBar />
      <Ribbon menuOpen={menuOpen} onToggle={() => setMenuOpen(!menuOpen)} />
      <div className="flex flex-1 min-h-0">
        <Sidebar />
        <Canvas />
      </div>
      <StatusBar />
    </div>
  );
}
